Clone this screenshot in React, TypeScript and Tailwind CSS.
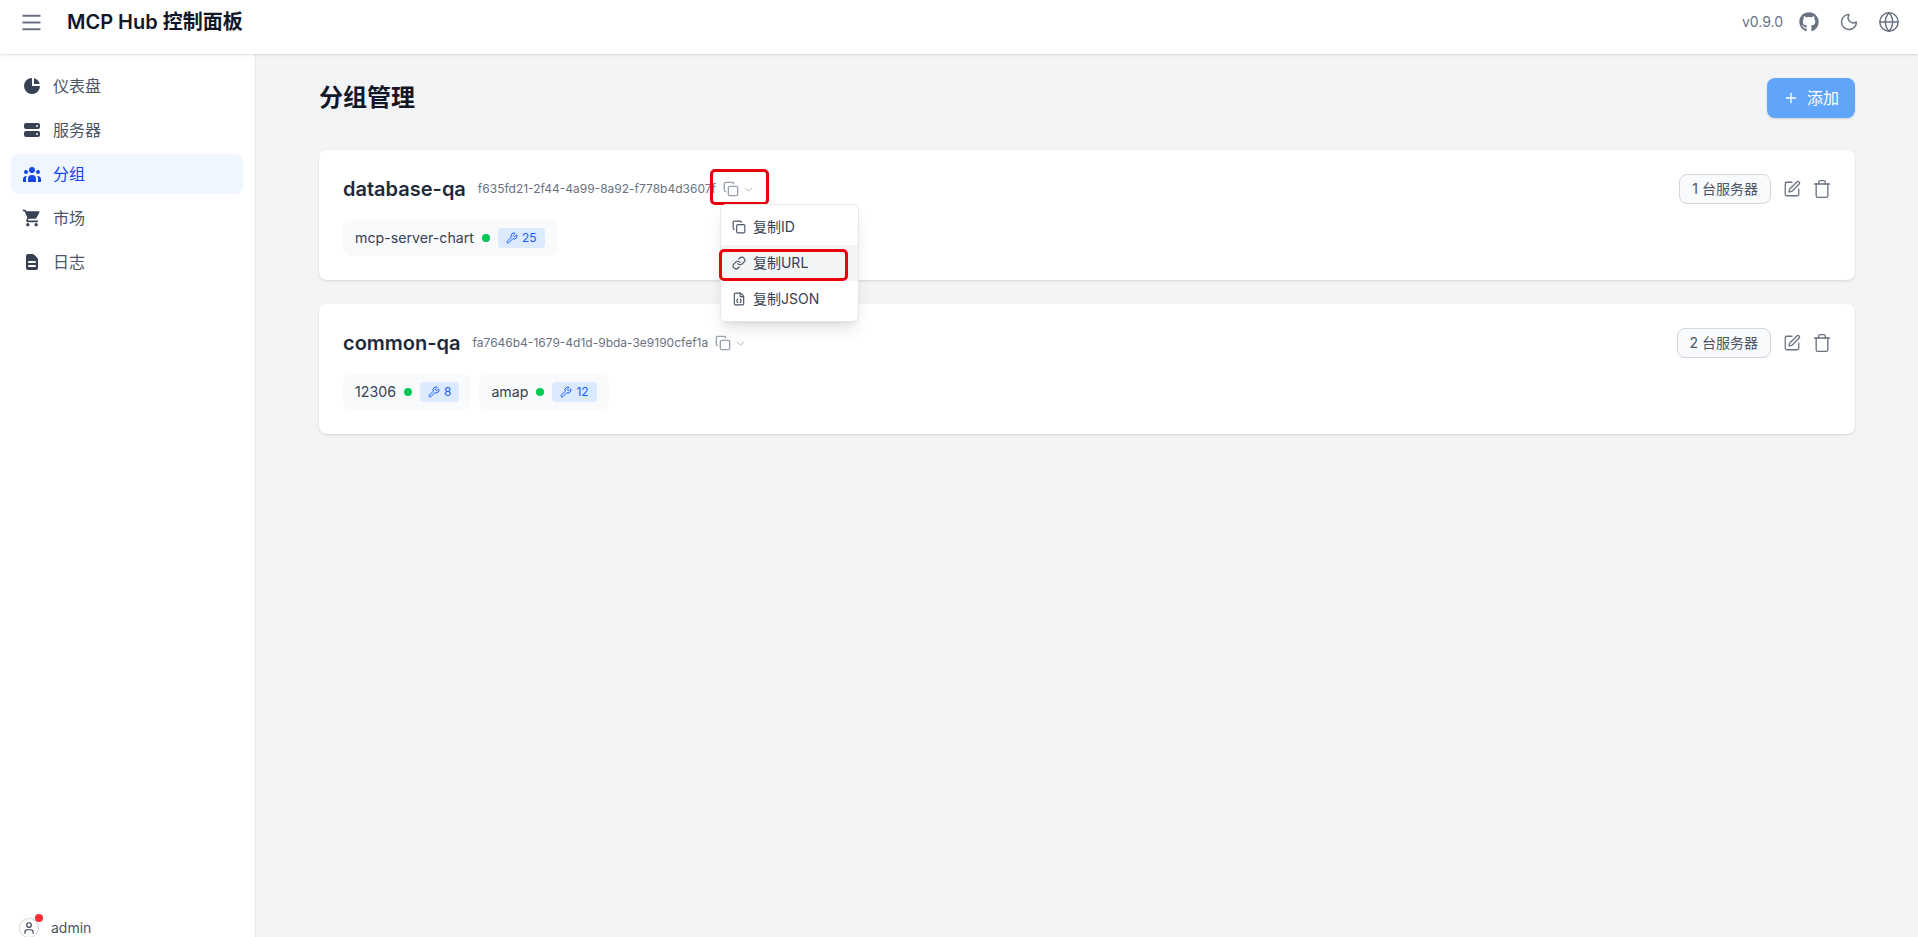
import { ChevronDown, Copy, FileJson, Globe, Link, Moon, Plus, SquarePen, Trash, User, Wrench } from 'lucide-react';
import { FaGithub } from 'react-icons/fa';
import { HiChartPie, HiDocumentText, HiServer, HiUserGroup } from 'react-icons/hi';
import { MdShoppingCart } from 'react-icons/md';

const navItems = [
  { label: '仪表盘', icon: HiChartPie },
  { label: '服务器', icon: HiServer },
  { label: '分组', icon: HiUserGroup, active: true },
  { label: '市场', icon: MdShoppingCart },
  { label: '日志', icon: HiDocumentText },
];

const groups = [
  {
    name: 'database-qa',
    id: 'f635fd21-2f44-4a99-8a92-f778b4d3607f',
    count: '1 台服务器',
    servers: [{ name: 'mcp-server-chart', tools: 25 }],
    open: true,
  },
  {
    name: 'common-qa',
    id: 'fa7646b4-1679-4d1d-9bda-3e9190cfef1a',
    count: '2 台服务器',
    servers: [
      { name: '12306', tools: 8 },
      { name: 'amap', tools: 12 },
    ],
    open: false,
  },
];

function CopyMenu() {
  return (
    <div className="absolute left-[-3px] top-[23px] z-10 w-[139px] rounded-md border border-gray-200 bg-white py-[4px] shadow-lg">
      <div className="flex h-[36px] items-center gap-[7px] px-[11px] text-sm text-gray-700">
        <Copy size={14} className="text-gray-600" />
        复制ID
      </div>
      <div className="relative flex h-[36px] items-center gap-[7px] bg-gray-100 px-[11px] text-sm text-gray-700">
        <Link size={14} className="text-gray-600" />
        复制URL
        <div className="absolute left-[-2px] top-[4px] h-[32px] w-[129px] rounded-[5px] border-[3px] border-[#e8000d]" />
      </div>
      <div className="flex h-[36px] items-center gap-[7px] px-[11px] text-sm text-gray-700">
        <FileJson size={14} className="text-gray-600" />
        复制JSON
      </div>
    </div>
  );
}

function GroupCard({ group }: { group: (typeof groups)[number] }) {
  return (
    <div className="h-[130px] rounded-lg bg-white px-6 pt-[24px] shadow-sm">
      <div className="flex h-[30px] items-center justify-between">
        <div className="flex items-center">
          <h2 className="text-xl font-semibold leading-[30px] text-gray-800">{group.name}</h2>
          <span className="ml-3 text-xs text-gray-500">{group.id}</span>
          <div className="relative ml-[7px] flex items-center gap-[3px] text-gray-400">
            <Copy size={16} />
            <ChevronDown size={13} strokeWidth={1.5} />
            {group.open && (
              <>
                <div className="absolute left-[-13px] top-[-12px] h-[36px] w-[59px] rounded-[5px] border-[3px] border-[#e8000d]" />
                <CopyMenu />
              </>
            )}
          </div>
        </div>
        <div className="flex items-center">
          <span className="flex h-[30px] items-center rounded-lg border border-gray-300 bg-gray-50 px-[12px] text-sm text-gray-600">
            {group.count}
          </span>
          <SquarePen size={18} strokeWidth={1.7} className="ml-[12px] text-gray-500" />
          <Trash size={20} strokeWidth={1.6} className="ml-[11px] mr-[-1px] text-gray-500" />
        </div>
      </div>
      <div className="mt-[16px] flex gap-2">
        {group.servers.map((server) => (
          <div key={server.name} className="flex h-[36px] items-center rounded-lg bg-gray-50 px-3 text-[14.2px] text-gray-700">
            <span>{server.name}</span>
            <span className="ml-2 h-2 w-2 rounded-full bg-[#00c951]" />
            <span className="ml-2 flex h-[20px] items-center gap-1 rounded bg-blue-100 px-[8px] text-xs text-blue-600">
              <Wrench size={12} />
              {server.tools}
            </span>
          </div>
        ))}
      </div>
    </div>
  );
}

export default function App() {
  return (
    <div className="flex h-[937px] flex-col overflow-hidden bg-gray-100 font-['Inter','Noto_Sans_CJK_SC',sans-serif]">
      <header className="relative z-20 flex h-[54px] shrink-0 justify-between bg-white pb-[10px] pl-[18px] pr-[18px] shadow-sm">
        <div className="flex items-center">
          <svg width="27" height="27" viewBox="0 0 24 24" fill="none" stroke="currentColor" strokeWidth="1.6" className="text-gray-500">
            <path d="M4 6h16M4 12h16M4 18h16" />
          </svg>
          <h1 className="ml-[22px] text-xl font-semibold text-gray-900">MCP Hub 控制面板</h1>
        </div>
        <div className="flex items-center text-gray-500">
          <span className="text-sm">v0.9.0</span>
          <FaGithub size={20} className="ml-[16px]" />
          <Moon size={20} strokeWidth={1.7} className="ml-[20px]" />
          <Globe size={22} strokeWidth={1.6} className="ml-[19px]" />
        </div>
      </header>
      <div className="flex min-h-0 flex-1">
        <aside className="flex w-[256px] shrink-0 flex-col justify-between border-r border-gray-200 bg-white">
          <nav className="flex flex-col gap-[4px] px-[11px] pt-[12px]">
            {navItems.map((item) => (
              <div
                key={item.label}
                className={`flex h-[40px] w-[232px] items-center rounded-lg pl-[11px] text-base ${
                  item.active ? 'bg-blue-50 text-blue-700' : 'text-gray-600'
                }`}
              >
                <item.icon size={20} className={item.active ? 'text-blue-700' : 'text-gray-700'} />
                <span className="ml-[11px]">{item.label}</span>
              </div>
            ))}
          </nav>
          <div className="relative mb-[-1px] flex h-[20px] items-center pl-[19px] text-sm text-gray-600">
            <div className="flex h-[20px] w-[20px] items-center justify-center rounded-full border border-gray-300">
              <User size={14} className="text-gray-700" />
            </div>
            <span className="ml-[12px]">admin</span>
            <span className="absolute left-[35px] top-[-4px] h-2 w-2 rounded-full bg-[#fb2c36]" />
          </div>
        </aside>
        <main className="flex-1 pl-[63px] pr-[63px] pt-[24px]">
          <div className="flex h-[40px] items-center justify-between">
            <h1 className="text-2xl font-bold text-gray-900">分组管理</h1>
            <button className="flex h-[40px] w-[88px] items-center justify-center gap-2 rounded-lg bg-[#60a5fa] text-base text-white shadow-sm">
              <Plus size={16} />
              添加
            </button>
          </div>
          <div className="mt-[32px] flex flex-col gap-6">
            {groups.map((group) => (
              <GroupCard key={group.name} group={group} />
            ))}
          </div>
        </main>
      </div>
    </div>
  );
}
